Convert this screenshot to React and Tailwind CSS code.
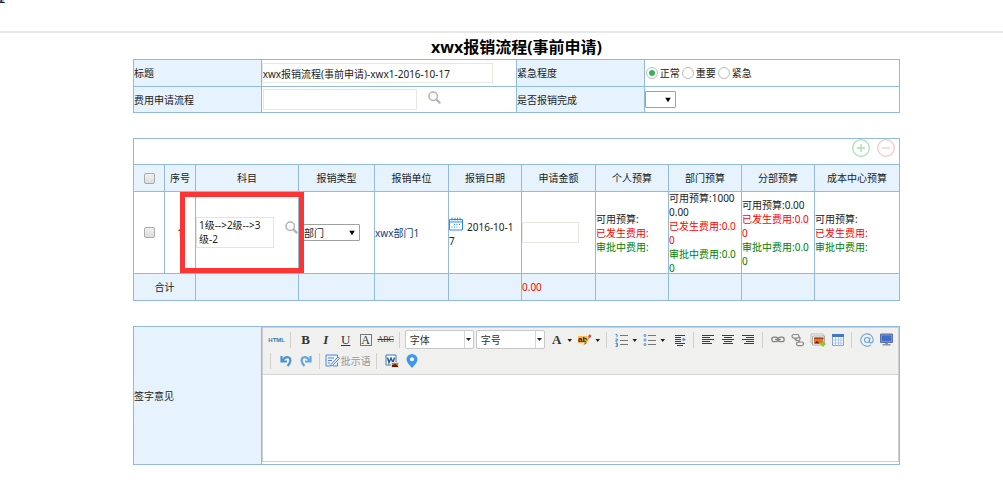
import React, { useState } from 'react';

const budgetCells = [
  { id: 'person', available: '', used: '', pending: '' },
  { id: 'dept', available: '10000.00', used: '0.00', pending: '0.00' },
  { id: 'branch', available: '0.00', used: '0.00', pending: '0.00' },
  { id: 'cost', available: '', used: '', pending: '' },
];

const headers = ['序号', '科目', '报销类型', '报销单位', '报销日期', '申请金额', '个人预算', '部门预算', '分部预算', '成本中心预算'];

const SearchIcon = () => (
  <svg className="w-[13px] h-[13px]" viewBox="0 0 13 13" fill="none" stroke="#b4b4b4">
    <circle cx="5.2" cy="5.2" r="4.2" strokeWidth="1.5" />
    <path d="M8.6 8.6l3 3" strokeWidth="2.2" strokeLinecap="round" />
  </svg>
);

const CalendarIcon = () => (
  <svg className="inline-block w-[14px] h-[14px] mr-1 align-baseline" viewBox="0 0 14 14" fill="none" stroke="#2a8cf0">
    <path d="M.5 2.5h13v10.5H.5z" />
    <path d="M.5 5h13" />
    <path d="M3 .5v3M6 .5v3M8.500 .5v3M11 .5v3" />
    <path d="M5 7.500h7M2.500 10h7" strokeDasharray="1 1.500" />
  </svg>
);

const SelectArrow = () => (
  <svg className="pointer-events-none absolute right-[5px] top-1/2 -translate-y-1/2 w-[6px] h-[6px]" viewBox="0 0 7 6">
    <path d="M.3.3h6.400L3.500 5.700z" fill="#000" />
  </svg>
);

const Sep = () => <span className="ml-[3px] mr-[5px] h-4 w-px shrink-0 bg-[#d0d0d0]"></span>;

const Caret = () => (
  <svg className="w-2 h-5 shrink-0" viewBox="0 0 8 20">
    <path d="M.5 9h4.500L2.750 12z" fill="#222" />
  </svg>
);

const Tool = ({ label, children }) => (
  <button type="button" aria-label={label} className="flex h-5 w-5 shrink-0 items-center justify-center">
    {children}
  </button>
);

const Lines = ({ rows }) => (
  <svg className="w-[13px] h-[12px]" viewBox="0 0 13 12" stroke="#3c3c3c">
    {rows.map(([x, w], i) => (
      <path key={i} d={`M${x} ${i * 2 + 1.5}h${w}`} />
    ))}
  </svg>
);

const Combo = ({ label }) => (
  <button
    type="button"
    className="flex h-[19px] w-[69px] shrink-0 items-stretch rounded-[2px] border border-[#c8c8c8] bg-white text-left"
  >
    <span className="flex-1 pl-1 leading-[18px]">{label}</span>
    <span className="flex w-[9px] items-center justify-center border-l border-[#d4d4d4]">
      <svg className="w-[5px] h-[3px]" viewBox="0 0 5 3">
        <path d="M0 0h5L2.500 3z" fill="#222" />
      </svg>
    </span>
  </button>
);

const Toolbar = () => (
  <div className="border-b border-[#d5d5d5] bg-[#f0f0ee] pl-1 pt-px pb-[3px] text-[#333]">
    <div className="flex h-[21px] items-center">
      <Tool label="HTML">
        <span className="font-['Liberation_Sans',sans-serif] text-[6px] font-bold text-[#3a78b0]">HTML</span>
      </Tool>
      <Sep />
      <Tool label="加粗">
        <span className="font-['Liberation_Serif',serif] text-[13px] font-bold">B</span>
      </Tool>
      <Tool label="倾斜">
        <span className="font-['Liberation_Serif',serif] text-[13px] font-bold italic">I</span>
      </Tool>
      <Tool label="下划线">
        <span className="font-['Liberation_Serif',serif] text-[13px] underline">U</span>
      </Tool>
      <Tool label="字符边框">
        <span className="flex h-3 w-3 items-center justify-center border border-[#777] font-['Liberation_Serif',serif] text-[12px]">A</span>
      </Tool>
      <Tool label="删除线">
        <span className="font-['Liberation_Serif',serif] text-[8px] line-through">ABC</span>
      </Tool>
      <Sep />
      <Combo label="字体" />
      <span className="w-0.5 shrink-0"></span>
      <Combo label="字号" />
      <span className="w-0.5 shrink-0"></span>
      <Tool label="字体颜色">
        <span className="font-['Liberation_Serif',serif] text-[13px] font-bold">A</span>
      </Tool>
      <Caret />
      <Tool label="背景色">
        <svg className="w-[15px] h-[12px]" viewBox="0 0 15 12">
          <path d="M1 2h9v7H1z" fill="#f7b95c" />
          <text x="1" y="8" fontSize="8" fontWeight="bold" fontFamily="Liberation Sans" fill="#222">ab</text>
          <path d="M12.500 2.500L9 8" stroke="#d9a04a" strokeWidth="1.600" />
          <path d="M13.500 1L12 3.200" stroke="#e23c3c" strokeWidth="2.400" />
          <path d="M8.500 8L6.500 11l3-1.500z" fill="#8a5a1c" />
        </svg>
      </Tool>
      <Caret />
      <Sep />
      <Tool label="有序列表">
        <svg className="w-[14px] h-[14px]" viewBox="0 0 14 14" fill="none">
          <path d="M5 2.500h8M5 7.500h8M5 11.500h8" stroke="#777" />
          <path d="M.5 1.500H2V4M.5 6h2v1.200H1V9h1.500M.5 10.500h2v3h-2M1 12h1.500" stroke="#4a86e8" />
        </svg>
      </Tool>
      <Caret />
      <Tool label="无序列表">
        <svg className="w-[14px] h-[14px]" viewBox="0 0 14 14" fill="none">
          <path d="M5 2.500h8M5 7.500h8M5 11.500h8" stroke="#777" />
          <g stroke="#4a86e8">
            <circle cx="2" cy="2.500" r="1" />
            <circle cx="2" cy="7" r="1" />
            <circle cx="2" cy="11.500" r="1" />
          </g>
        </svg>
      </Tool>
      <Caret />
      <span className="w-0.5 shrink-0"></span>
      <Tool label="缩进">
        <svg className="w-[12px] h-[12px]" viewBox="0 0 12 12" stroke="#3c3c3c">
          <path d="M1 1.500h10M1 3.500h6M1 5.500h6M1 7.500h6M1 9.500h10M3 11.500h6" />
          <path d="M8 5.500h1.500M9 4l2.500 1.500L9 7z" stroke="#4a86e8" strokeWidth=".6" fill="#4a86e8" />
        </svg>
      </Tool>
      <Sep />
      <Tool label="左对齐"><Lines rows={[[0, 12], [0, 8], [0, 12], [0, 8], [0, 10]]} /></Tool>
      <Tool label="居中"><Lines rows={[[0, 12], [2, 8], [0, 12], [2, 8], [1, 10]]} /></Tool>
      <Tool label="右对齐"><Lines rows={[[0, 12], [4, 8], [0, 12], [4, 8], [2, 10]]} /></Tool>
      <Sep />
      <Tool label="超链接">
        <svg className="w-[14px] h-[7px]" viewBox="0 0 14 7" fill="none" stroke="#858585" strokeWidth="1.300">
          <rect x=".8" y="1.200" width="6" height="4.500" rx="2.200" />
          <rect x="7.200" y="1.200" width="6" height="4.500" rx="2.200" />
          <path d="M4 3.500h6" />
        </svg>
      </Tool>
      <Tool label="取消超链接">
        <svg className="w-[14px] h-[14px]" viewBox="0 0 14 14" fill="none" stroke="#858585" strokeWidth="1.200">
          <rect x="1" y="1.500" width="7" height="3.600" rx="1.800" />
          <rect x="5.500" y="9" width="7" height="3.600" rx="1.800" />
          <path d="M4 5.500c0 2 1.500 2 3 2M8 4c2 1 1 2.500 0 3.500s0 1.500 1 1.500" />
        </svg>
      </Tool>
      <Tool label="图片">
        <svg className="w-[16px] h-[14px]" viewBox="0 0 16 14">
          <path d="M1 1h12v9H1z" fill="#fff" stroke="#bbb" />
          <path d="M2.500 3h12v9h-12z" fill="#fff" stroke="#aaa" />
          <path d="M4 4.500h9.500v6H4z" fill="#ee7420" />
          <path d="M4 4.500h9.500v1.500H4z" fill="#a8441a" />
          <path d="M4 10.500l3-2.500 3 2.500z" fill="#5b220b" />
          <path d="M13 8.500v5M10.500 11h5" stroke="#8bcb1e" strokeWidth="2.200" />
        </svg>
      </Tool>
      <Tool label="表格">
        <svg className="w-[12px] h-[12px]" viewBox="0 0 12 12">
          <path d="M.5.5h11v11H.5z" fill="#fff" stroke="#7ba4dc" />
          <path d="M0 0h12v3H0z" fill="#3f78c9" />
          <path d="M3.500 3v9M6.500 3v9M9 3v9M0 6h12M0 9h12" stroke="#9dbde8" strokeWidth=".8" />
        </svg>
      </Tool>
      <Sep />
      <Tool label="提及">
        <svg className="w-[14px] h-[14px]" viewBox="0 0 14 14" fill="none" stroke="#6aa5d8" strokeWidth="1.100">
          <path d="M11 11.800A6.200 6.200 0 1 1 13.200 7c0 2-1 2.900-2.200 2.900S9.200 9 9.400 8l.6-3.500" />
          <circle cx="7" cy="7" r="2.500" />
        </svg>
      </Tool>
      <Tool label="全屏">
        <svg className="w-[13px] h-[13px]" viewBox="0 0 13 13">
          <path d="M.5 1h12v8.500H.5z" fill="#7d93c4" stroke="#5a70a8" />
          <path d="M2 2.500h9V8H2z" fill="#3f6ccb" />
          <path d="M5 10h3v1H5zM2.500 11h8v1.500h-8z" fill="#8a93a6" />
        </svg>
      </Tool>
    </div>
    <div className="flex h-[21px] items-center">
      <Sep />
      <Tool label="撤销">
        <svg className="w-[12px] h-[12px]" viewBox="0 0 12 12" fill="none" stroke="#4b94d4" strokeWidth="2.200">
          <path d="M1.500 1v5.500H7" />
          <path d="M2.500 6C4 3 6.500 1.600 8.800 2.500S11 7.500 7.500 11" />
        </svg>
      </Tool>
      <Tool label="重做">
        <svg className="w-[12px] h-[12px]" viewBox="0 0 12 12" fill="none" stroke="#62a6de" strokeWidth="2.200">
          <path d="M10.500 1v5.500H5" />
          <path d="M9.500 6C8 3 5.500 1.600 3.200 2.500S1 7.500 4.500 11" />
        </svg>
      </Tool>
      <Sep />
      <button type="button" className="flex h-5 w-[48px] shrink-0 items-center gap-px whitespace-nowrap text-[#999]">
        <svg className="w-[15px] h-[13px] shrink-0" viewBox="0 0 15 13" fill="none" stroke="#4a86e8">
          <path d="M12.500 3V1H1v11h4M12.500 8.500V12H8M3 4h6M3 6.500h4M3 9h2" />
          <path d="M6 10.500L13 3l1.500 1.300L7.500 11.500 5.500 12z" />
        </svg>
        <span>批示语</span>
      </button>
      <Sep />
      <Tool label="Word">
        <svg className="w-[14px] h-[14px]" viewBox="0 0 14 14">
          <path d="M1 1h10v10H1z" fill="#fff" stroke="#3a78b0" />
          <path d="M2.500 3.500L4 8.500l2-4.500 2 4.500 1.500-5" fill="none" stroke="#1f5fa8" strokeWidth="1.500" />
          <path d="M6.500 8.500h7v5h-7z" fill="#e0721e" stroke="#ddd" />
          <path d="M7 11.500l3-1.500 3 2v1H7z" fill="#4b2208" />
        </svg>
      </Tool>
      <Tool label="位置">
        <svg className="w-[12px] h-[14px]" viewBox="0 0 12 14">
          <path d="M6 14C3 10.500.5 8.200.5 5.300a5.500 5.300 0 0 1 11 0C11.500 8.200 9 10.500 6 14z" fill="#3b97f2" />
          <circle cx="6" cy="5.300" r="2" fill="#fff" />
        </svg>
      </Tool>
    </div>
  </div>
);

const App = () => {
  const [level, setLevel] = useState('正常');

  const cell = 'border border-[#90bbdf] p-0';
  const labelCell = 'border border-[#90bbdf] bg-[#e6f3fc] p-0 text-left font-normal';
  const checkbox =
    "block mx-auto h-[11px] w-[11px] appearance-none rounded-[2px] border border-[#aaa] bg-linear-to-b from-[#f2f2f2] to-[#dcdcdc]";

  return (
    <div className="bg-white font-['Noto_Sans','Noto_Sans_CJK_SC',sans-serif] text-[10px] leading-[14px] text-[#222]">
      <header className="h-[33px] border-b-2 border-[#e7e7e7]">
        <div className="flex h-1 w-[5px] items-end justify-end overflow-hidden text-xs leading-3 font-bold text-[#10204a]">
          <span>程</span>
        </div>
      </header>

      <main className="pl-[133px] pr-[103px]">
        <h1 className="h-[26px] text-center text-base leading-[29px] font-bold text-black">xwx报销流程(事前申请)</h1>

        <table className="w-full table-fixed border-collapse">
          <colgroup>
            <col className="w-1/6" />
            <col className="w-1/3" />
            <col className="w-1/6" />
            <col className="w-1/3" />
          </colgroup>
          <tbody>
            <tr className="h-[27px]">
              <th className={labelCell}><label htmlFor="title">标题</label></th>
              <td className={cell}>
                <input
                  id="title"
                  type="text"
                  defaultValue="xwx报销流程(事前申请)-xwx1-2016-10-17"
                  className="block h-5 w-[231px] border border-[#e8e8e0]"
                />
              </td>
              <th className={labelCell}>紧急程度</th>
              <td className={cell}>
                <div className="flex items-center gap-0.5 pl-px">
                  {['正常', '重要', '紧急'].map((item) => (
                    <label key={item} className="flex items-center gap-0.5">
                      <input
                        type="radio"
                        name="level"
                        checked={level === item}
                        onChange={() => setLevel(item)}
                        className="h-3 w-3 appearance-none rounded-full border border-[#bbb] bg-white bg-clip-content p-[2px] checked:bg-[#35b558]"
                      />
                      {item}
                    </label>
                  ))}
                </div>
              </td>
            </tr>
            <tr className="h-[26px]">
              <th className={labelCell}><label htmlFor="flow">费用申请流程</label></th>
              <td className={cell}>
                <div className="flex items-start pl-px">
                  <input id="flow" type="text" className="h-[21px] w-[154px] border border-[#e8e8e0]" />
                  <button type="button" aria-label="查找流程" className="ml-[11px] mt-0.5"><SearchIcon /></button>
                </div>
              </td>
              <th className={labelCell}><label htmlFor="done">是否报销完成</label></th>
              <td className={cell}>
                <div className="relative w-[31px]">
                  <select id="done" className="block h-[17px] w-full appearance-none rounded-[1px] border border-[#a0a0a0] bg-white">
                    <option></option>
                    <option>是</option>
                    <option>否</option>
                  </select>
                  <SelectArrow />
                </div>
              </td>
            </tr>
          </tbody>
        </table>

        <table className="mt-[25px] w-full table-fixed border-collapse">
          <colgroup>
            <col className="w-[31px]" />
            <col className="w-[31px]" />
            <col className="w-[103px]" />
            <col className="w-[76px]" />
            <col className="w-[74px]" />
            <col className="w-[73px]" />
            <col className="w-[74px]" />
            <col className="w-[73px]" />
            <col className="w-[73px]" />
            <col className="w-[73px]" />
            <col className="w-[85px]" />
          </colgroup>
          <tbody>
            <tr className="h-[26px]">
              <td colSpan={11} className={cell}>
                <div className="flex h-[25px] items-start justify-end gap-[7px] pr-1">
                  <button type="button" aria-label="添加">
                    <svg className="w-[18px] h-[18px]" viewBox="0 0 18 18" fill="none" stroke="#a5e2ab">
                      <circle cx="9" cy="9" r="8.300" strokeWidth="1.300" />
                      <path d="M5 9h8M9 5v8" strokeWidth="1.300" />
                    </svg>
                  </button>
                  <button type="button" aria-label="删除">
                    <svg className="w-[18px] h-[18px]" viewBox="0 0 18 18" fill="none" stroke="#f8c6c6">
                      <circle cx="9" cy="9" r="8.300" strokeWidth="1.300" />
                      <path d="M5 9h8" strokeWidth="1.300" />
                    </svg>
                  </button>
                </div>
              </td>
            </tr>
            <tr className="h-[27px] bg-[#e6f3fc]">
              <th className={cell}><input type="checkbox" aria-label="全选" className={checkbox} /></th>
              {headers.map((text) => (
                <th key={text} className="border border-[#90bbdf] p-0 text-center font-normal">{text}</th>
              ))}
            </tr>
            <tr className="h-[82px]">
              <td className={cell}><input type="checkbox" aria-label="选择第1行" className={checkbox} /></td>
              <td className={`${cell} text-center`}>1</td>
              <td className={`${cell} relative`}>
                <div className="flex items-start">
                  <textarea
                    aria-label="科目"
                    rows={2}
                    defaultValue={'1级-->2级-->3\n级-2'}
                    className="block h-[31px] w-[78px] resize-none overflow-hidden whitespace-pre border border-[#e4e4da] px-0.5 leading-[14px]"
                  ></textarea>
                  <button type="button" aria-label="查找科目" className="ml-[11px] mt-1"><SearchIcon /></button>
                </div>
                <div className="pointer-events-none absolute -left-4 -right-1.5 top-0 bottom-0 z-10 border-[5px] border-[#fd3434]"></div>
              </td>
              <td className={cell}>
                <div className="relative ml-px w-[60px]">
                  <select aria-label="报销类型" className="block h-[17px] w-full appearance-none rounded-[1px] border border-[#a0a0a0] bg-white pl-[3px]">
                    <option>部门</option>
                    <option>个人</option>
                  </select>
                  <SelectArrow />
                </div>
              </td>
              <td className={cell}><a href="#dept" className="text-[#123885]">xwx部门1</a></td>
              <td className="border border-[#90bbdf] py-0 pl-0 pr-1 break-all"><CalendarIcon />2016-10-17</td>
              <td className={cell}>
                <input type="text" aria-label="申请金额" className="block h-[21px] w-[57px] border border-[#e8e8e0]" />
              </td>
              {budgetCells.map((b) => (
                <td key={b.id} className={`${cell} break-all`}>
                  <div className="-my-0.5">
                    <div>可用预算:{b.available}</div>
                    <div className="text-[#ff0000]">已发生费用:{b.used}</div>
                    <div className="text-[#008000]">审批中费用:{b.pending}</div>
                  </div>
                </td>
              ))}
            </tr>
            <tr className="h-[27px] bg-[#e6f3fc]">
              <td colSpan={2} className={`${cell} text-center`}>合计</td>
              <td className={cell}></td>
              <td className={cell}></td>
              <td className={cell}></td>
              <td className={cell}></td>
              <td className={`${cell} text-[#ff0000]`}>0.00</td>
              <td className={cell}></td>
              <td className={cell}></td>
              <td className={cell}></td>
              <td className={cell}></td>
            </tr>
          </tbody>
        </table>

        <table className="mt-[25px] w-full table-fixed border-collapse">
          <colgroup>
            <col className="w-1/6" />
            <col className="w-5/6" />
          </colgroup>
          <tbody>
            <tr>
              <th className={labelCell}><label htmlFor="remark">签字意见</label></th>
              <td className="border border-[#90bbdf] px-0 pt-0 pb-0.5">
                <div className="border border-[#d0d0d0]">
                  <Toolbar />
                  <textarea id="remark" className="block h-[86px] w-full resize-none"></textarea>
                </div>
              </td>
            </tr>
          </tbody>
        </table>
      </main>
    </div>
  );
};

export default App;
